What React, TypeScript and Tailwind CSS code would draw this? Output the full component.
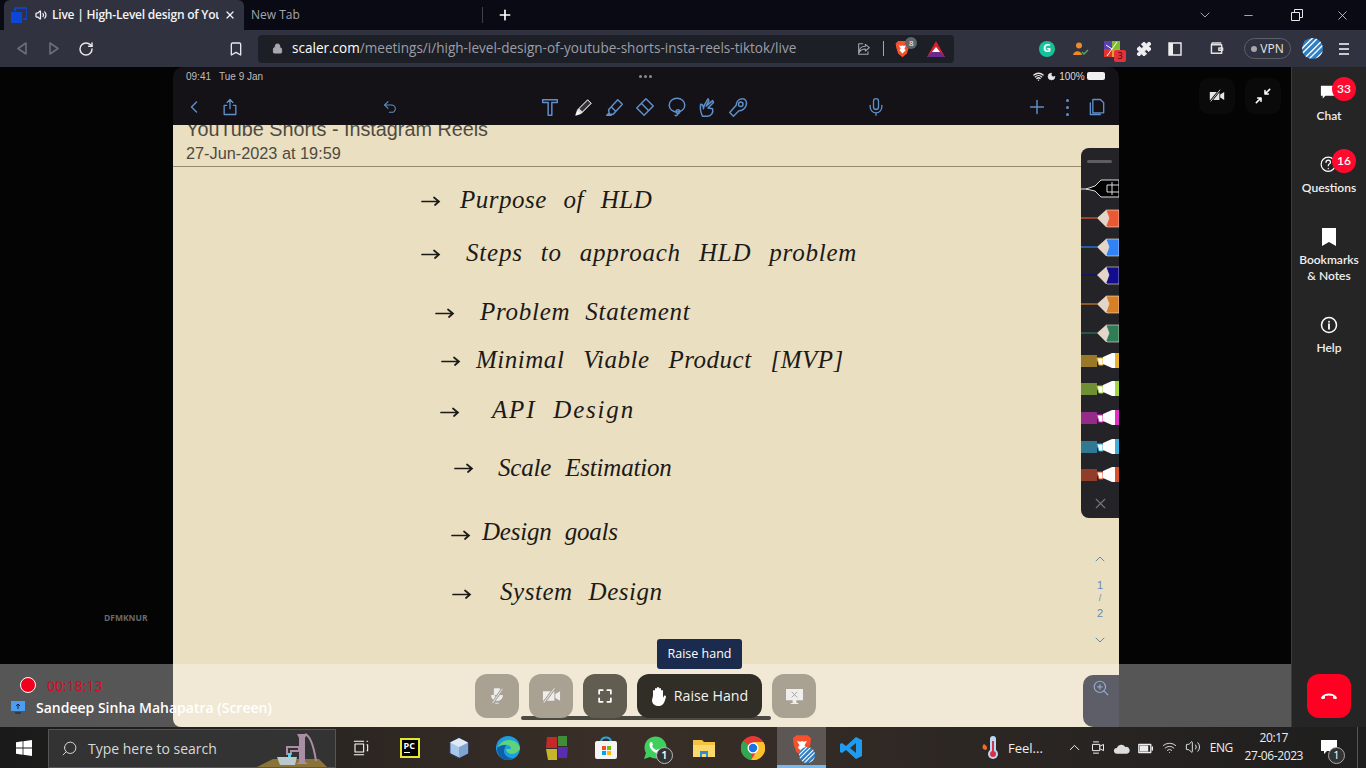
import React from "react";
import { ChevronLeft, ChevronUp, ChevronDown, Plus, Undo2, Mic, RotateCw, Lock, Bookmark, Puzzle, X, Minus, Search, Volume2, Wifi, Moon } from "lucide-react";

const S = ({ className, children, vb = "0 0 24 24" }: { className?: string; children: React.ReactNode; vb?: string }) => (
  <svg viewBox={vb} className={className} fill="none" stroke="currentColor" strokeWidth={1.6} strokeLinecap="round" strokeLinejoin="round">{children}</svg>
);

const Globe = ({ className }: { className: string }) => (
  <svg viewBox="0 0 24 24" className={className}>
    <defs><clipPath id="gc"><circle cx="12" cy="12" r="12" /></clipPath></defs>
    <g clipPath="url(#gc)">
      <rect width="24" height="24" fill="#2f7fc4" />
      <path d="M-4 10L12-6M-4 16L18-6M-4 22L24-6M0 26L28-2M6 26L28 4M12 28L30 10" stroke="#fff" strokeWidth="1.6" />
    </g>
  </svg>
);

const BraveLogo = ({ className }: { className: string }) => (
  <svg viewBox="0 0 24 28" className={className}>
    <path d="M5 1h14l4 4-1 7-3 9-7 6-7-6-3-9L1 5z" fill="#f4512c" />
    <path d="M6 8l4 1 2-1 2 1 4-1-3 5 2 3-5 5-5-5 2-3z" fill="#fff" />
  </svg>
);

function Tabs() {
  return (
    <div className="flex h-[30px] bg-[#0a0a14] text-[12px] font-['Open_Sans',sans-serif]">
      <div className="ml-[4px] flex h-[30px] w-[240px] items-center rounded-t-[6px] bg-[#30333f] pl-[7px] text-[#f4f4f6]">
        <svg viewBox="0 0 16 16" className="h-[16px] w-[16px]"><path d="M0 5h11v11H0z" fill="#0d47d9" /><path d="M4 4V1h12v11h-4" fill="none" stroke="#0d47d9" strokeWidth="1.6" /></svg>
        <Volume2 className="ml-[8px] h-[12px] w-[12px]" strokeWidth={2.5} />
        <span className="ml-[5px] w-[167px] overflow-hidden whitespace-nowrap font-semibold tracking-[-0.22px]">Live | High-Level design of You</span>
        <X className="ml-[5px] h-[12px] w-[12px]" strokeWidth={2.5} />
      </div>
      <span className="ml-[7px] flex w-[231px] items-center text-[#a3a5ad]">New Tab</span>
      <div className="my-[7px] w-px bg-[#3f414a]" />
      <Plus className="ml-[14px] mt-[7px] h-[16px] w-[16px] text-white" strokeWidth={2.5} />
      <div className="ml-auto flex items-center text-[#e6e6e8]">
        <ChevronDown className="h-[16px] w-[16px] text-[#c8c8cc]" strokeWidth={1.2} />
        <Minus className="ml-[29px] h-[13px] w-[13px]" strokeWidth={1.3} />
        <svg viewBox="0 0 12 12" className="ml-[36px] h-[12px] w-[12px]" fill="none" stroke="currentColor"><path d="M.5 3.5h8v8h-8zM3.5 3V.5h8v8H9" /></svg>
        <X className="ml-[32px] mr-[16px] h-[15px] w-[15px]" strokeWidth={1.2} />
      </div>
    </div>
  );
}

function Toolbar() {
  return (
    <div className="flex h-[37px] items-center bg-[#30333f] font-['Open_Sans',sans-serif]">
      <S vb="0 0 12 14" className="ml-[16px] h-[15px] w-[12px] text-[#6b6e78]"><path d="M10 1.500v11L2 7z" /></S>
      <S vb="0 0 12 14" className="ml-[20px] h-[15px] w-[12px] text-[#6b6e78]"><path d="M2 1.500v11L10 7z" /></S>
      <RotateCw className="ml-[18px] h-[16px] w-[16px] text-[#e8e8ea]" strokeWidth={2.2} />
      <Bookmark className="ml-[134px] h-[16px] w-[16px] text-[#e8e8ea]" strokeWidth={2} />
      <div className="ml-[14px] flex h-[28px] w-[696px] items-center rounded-[4px] bg-[#1d1f27] pl-[14px]">
        <Lock className="h-[11px] w-[11px] fill-[#a8a8ae] text-[#a8a8ae]" strokeWidth={2} />
        <span className="ml-[9px] whitespace-nowrap text-[13.55px]"><span className="text-white">scaler.com</span><span className="text-[#9c9ea6]">/meetings/i/high-level-design-of-youtube-shorts-insta-reels-tiktok/live</span></span>
        <S className="ml-[60px] h-[16px] w-[16px] text-[#a5a7ad]" ><path d="M14 5l6 5-6 5v-3c-4 0-7 1-9 5 0-6 3-9 9-9zM10 4H4v16h14v-4" /></S>
        <div className="ml-[11px] h-[15px] w-px bg-[#a5a7ad]" />
        <div className="relative ml-[11px]">
          <BraveLogo className="h-[18px] w-[15px]" />
          <span className="absolute left-[10px] top-[-3px] flex h-[12px] w-[12px] items-center justify-center rounded-full bg-[#62646c] text-[8px] text-white">8</span>
        </div>
        <svg viewBox="0 0 18 16" className="ml-[17px] h-[16px] w-[18px]"><path d="M9 0l9 16H0z" fill="#d9202e" /><path d="M0 16l5-5h8l5 5z" fill="#662d91" /><path d="M9 6l4 5H5z" fill="#fff" /></svg>
      </div>
      <div className="ml-[85px] flex h-[16px] w-[16px] items-center justify-center rounded-full bg-[#15c39a] text-[11px] font-bold text-white">G</div>
      <svg viewBox="0 0 16 14" className="ml-[18px] h-[14px] w-[16px]"><circle cx="6" cy="3.5" r="3" fill="#f08a24" /><path d="M0 13c1-5 8-5 9 0z" fill="#f08a24" /><path d="M9 10l2 2 4-4" stroke="#4caf50" fill="none" strokeWidth="1.4" /></svg>
      <div className="relative ml-[15px] h-[16px] w-[16px]">
        <svg viewBox="0 0 16 16" className="h-[16px] w-[16px]"><path d="M0 0h8v8H0z" fill="#5a3fb0" /><path d="M8 0h8v8H8z" fill="#7dbb2f" /><path d="M0 8h8v8H0z" fill="#e0342f" /><path d="M8 8h8v8H8z" fill="#e89a2c" /><path d="M3 15l5-7 5-7M8 8L2 4" stroke="#fff" strokeWidth="1" /></svg>
        <span className="absolute left-[10px] top-[9px] flex h-[12px] w-[12px] items-center justify-center rounded-[2px] bg-[#e5313a] text-[9px] text-[#3a0b0b]">3</span>
      </div>
      <Puzzle className="ml-[16px] h-[16px] w-[16px] fill-[#eeeef0] text-[#eeeef0]" strokeWidth={1.5} />
      <svg viewBox="0 0 14 14" className="ml-[16px] h-[14px] w-[14px]"><path d="M1 1h12v12H1z" fill="none" stroke="#eee" strokeWidth="1.4" /><path d="M1 1h4v12H1z" fill="#eee" /></svg>
      <S vb="0 0 16 14" className="ml-[27px] h-[13px] w-[16px] text-[#e2e2e4]"><path d="M2 3h11v9H2zM2 3l1-2h9M10 6.500h4v2.500h-4z" /></S>
      <div className="ml-[19px] flex h-[21px] w-[47px] items-center justify-center rounded-full border border-[#5d606b] text-[12px] text-[#e6e6e8]"><span className="mr-[3px] h-[6px] w-[6px] rounded-full bg-[#a5a7ad]" />VPN</div>
      <Globe className="ml-[11px] h-[21px] w-[21px]" />
      <div className="ml-[16px] flex w-[10px] flex-col gap-[3px]"><div className="h-[2px] bg-[#c8c9cd]" /><div className="h-[2px] bg-[#c8c9cd]" /><div className="h-[2px] bg-[#c8c9cd]" /></div>
    </div>
  );
}

function IpadHeader() {
  const blue = "text-[#5f8fc9]";
  return (
    <div className="flex h-[58px] flex-none flex-col rounded-t-[10px] bg-[#151217] font-['Liberation_Sans',sans-serif]">
      <div className="flex h-[18px] items-center text-[10px] text-[#bdbdbd]">
        <span className="ml-[13px]">09:41</span>
        <span className="ml-[8px]">Tue 9 Jan</span>
        <span className="ml-[376px] flex gap-[2px]"><i className="h-[3px] w-[3px] rounded-full bg-[#8b8b8f]" /><i className="h-[3px] w-[3px] rounded-full bg-[#8b8b8f]" /><i className="h-[3px] w-[3px] rounded-full bg-[#8b8b8f]" /></span>
        <Wifi className="ml-[381px] h-[11px] w-[11px] text-[#e6e6e6]" strokeWidth={3} />
        <Moon className="ml-[3px] h-[9px] w-[9px] fill-[#e6e6e6] text-[#e6e6e6]" />
        <span className="ml-[3px] text-[#dcdcdc]">100%</span>
        <span className="ml-[2px] h-[8px] w-[18px] rounded-[2px] bg-[#f0f0f0]" />
      </div>
      <div className="flex h-[40px] items-center pt-[4px]">
        <ChevronLeft className={`ml-[11px] h-[20px] w-[20px] ${blue}`} strokeWidth={1.7} />
        <S className={`ml-[16px] h-[20px] w-[20px] ${blue}`}><path d="M12 14V3M8.5 6.500L12 3l3.500 3.500M8 10H5v11h14V10h-3" /></S>
        <Undo2 className={`ml-[142px] h-[16px] w-[16px] ${blue}`} strokeWidth={1.6} />
        <S className={`ml-[141px] h-[22px] w-[22px] ${blue}`}><path d="M4 7V4h16v3h-6v14h-4V7z" /></S>
        <svg viewBox="0 0 24 24" className="ml-[12px] h-[22px] w-[22px]"><path d="M3 21l2-6L16 4l4 4L9 19z" fill="#ddd" stroke="#ddd" /><path d="M7 14l9-9 3 3-9 9z" fill="#333" /><path d="M3 21l2-5 3 3z" fill="#fff" /></svg>
        <S className={`ml-[9px] h-[22px] w-[22px] ${blue}`}><path d="M5 15L15 4l5 5-10 11H6zM5 19l-2 2h5M8 12l5 5" /></S>
        <S className={`ml-[8px] h-[22px] w-[22px] ${blue}`}><path d="M3 13L13 3l8 8-10 10zM8 8l8 8" /></S>
        <S className={`ml-[10px] h-[22px] w-[22px] ${blue}`}><ellipse cx="12" cy="10" rx="8.500" ry="7.500" /><circle cx="13" cy="17" r="2" /><path d="M13 19c0 2-2 3-3 2" /></S>
        <S className={`ml-[9px] h-[22px] w-[22px] ${blue}`}><path d="M6 22c-2-4-3-8-2-13 2 0 3 2 3 5l1-4 4-7 1 2-3 6 7-6 1 2-6 6 5 1c1 4-1 8-6 8z" /></S>
        <S className={`ml-[8px] h-[22px] w-[22px] ${blue}`}><path d="M3 18l7-8c0-5 4-7 7-7s5 3 4 7-5 6-8 6l-6 6z" /><circle cx="15" cy="9" r="2.500" /></S>
        <Mic className={`ml-[117px] h-[20px] w-[20px] ${blue}`} strokeWidth={1.6} />
        <Plus className={`ml-[140px] h-[22px] w-[22px] ${blue}`} strokeWidth={1.6} />
        <div className="ml-[18px] flex flex-col gap-[4px]"><i className="h-[3px] w-[3px] rounded-full bg-[#5f8fc9]" /><i className="h-[3px] w-[3px] rounded-full bg-[#5f8fc9]" /><i className="h-[3px] w-[3px] rounded-full bg-[#5f8fc9]" /></div>
        <S className={`ml-[18px] h-[20px] w-[20px] ${blue}`}><path d="M7 3h9l4 4v12H7zM4 7v14h12" /></S>
      </div>
    </div>
  );
}

const Arrow = ({ className }: { className: string }) => (
  <svg viewBox="0 0 20 10" className={className} fill="none" stroke="#1c1a18" strokeWidth="1.7" strokeLinecap="round"><path d="M1 5.500h17M13 1.500l5 4-4 3.500" /></svg>
);

const hand = "absolute whitespace-nowrap font-['Liberation_Serif',serif] italic text-[#1c1a18] text-[25px] leading-none";

function Handwriting() {
  return (
    <>
      <Arrow className="absolute left-[248px] top-[71px] h-[10px] w-[20px]" />
      <span className={`${hand} left-[287px] top-[62px] tracking-[0.5px] [word-spacing:10px]`}>Purpose of HLD</span>
      <Arrow className="absolute left-[248px] top-[124px] h-[10px] w-[20px]" />
      <span className={`${hand} left-[293px] top-[115px] tracking-[0.78px] [word-spacing:11px]`}>Steps to approach HLD problem</span>
      <Arrow className="absolute left-[262px] top-[183px] h-[10px] w-[20px]" />
      <span className={`${hand} left-[307px] top-[174px] tracking-[0.73px] [word-spacing:8px]`}>Problem Statement</span>
      <Arrow className="absolute left-[268px] top-[231px] h-[10px] w-[20px]" />
      <span className={`${hand} left-[303px] top-[222px] tracking-[0.52px] [word-spacing:12px]`}>Minimal Viable Product [MVP]</span>
      <Arrow className="absolute left-[267px] top-[282px] h-[10px] w-[20px]" />
      <span className={`${hand} left-[319px] top-[272px] tracking-[1.8px] [word-spacing:9px]`}>API Design</span>
      <Arrow className="absolute left-[281px] top-[338px] h-[10px] w-[20px]" />
      <span className={`${hand} left-[325px] top-[330px] tracking-[-0.2px] [word-spacing:8px]`}>Scale Estimation</span>
      <Arrow className="absolute left-[278px] top-[405px] h-[10px] w-[20px]" />
      <span className={`${hand} left-[309px] top-[394px] tracking-[-0.2px] [word-spacing:7px]`}>Design goals</span>
      <Arrow className="absolute left-[279px] top-[464px] h-[10px] w-[20px]" />
      <span className={`${hand} left-[327px] top-[454px] tracking-[0.55px] [word-spacing:9px]`}>System Design</span>
    </>
  );
}

function PenRail() {
  const pen = (y: number, c: string) => (
    <g key={y}>
      <path d={`M0 ${y}h16`} stroke={c} strokeWidth="1.5" opacity="0.8" />
      <path d={`M16 ${y}l9-8h13v17H25z`} fill="#e3d5c8" />
      <path d={`M25 ${y - 8}h13v17H26l-1-1 3-8z`} fill={c} stroke="#f0e8e0" strokeWidth="0.6" />
    </g>
  );
  const marker = (y: number, c: string) => (
    <g key={y}>
      <path d={`M0 ${y - 6}h16v12H0z`} fill={c} opacity="0.6" />
      <path d={`M16 ${y - 3}h6v7h-4z`} fill="#fff" stroke={c} strokeWidth="1" />
      <path d={`M22 ${y - 4}l9-4h3v15h-3l-9-4z`} fill="#fff" />
      <path d={`M34 ${y - 8}h4v15h-4z`} fill={c} />
    </g>
  );
  return (
    <div className="absolute right-0 top-[23px] flex h-[370px] w-[38px] flex-col rounded-l-[8px] bg-[#232328]">
      <div className="ml-[6px] mt-[12px] h-[3px] w-[25px] flex-none rounded-full bg-[#5e5e62]" />
      <svg viewBox="0 0 38 322" className="h-[322px] w-[38px] flex-none">
        <g>
          <path d="M0 26h6" stroke="#aaa" strokeWidth="1.5" />
          <path d="M5 26l9-3 6-6h18v17H20l-6-6z" fill="#000" stroke="#ddd" strokeWidth="1" />
          <path d="M26 22h12M26 22v7h12M31 19v13" stroke="#ddd" strokeWidth="1" fill="none" />
        </g>
        {[["55", "#e95a34"], ["84", "#2f83f6"], ["112", "#130c8c"], ["141", "#d67f26"], ["170", "#2e7d56"]].map(([y, c]) => pen(Number(y), c))}
        {[["198", "#e8b32a"], ["226", "#a4d53a"], ["255", "#e030c8"], ["284", "#3bb0dc"], ["312", "#d9502a"]].map(([y, c]) => marker(Number(y), c))}
      </svg>
      <X className="ml-[11px] mt-[10px] h-[17px] w-[17px] text-[#77777b]" strokeWidth={1.6} />
    </div>
  );
}

function PageNav() {
  return (
    <div className="absolute right-[7px] top-[426px] flex w-[24px] flex-col items-center text-[11px] leading-none text-[#6787b8] font-['Liberation_Sans',sans-serif]">
      <ChevronUp className="h-[16px] w-[16px]" strokeWidth={1.5} />
      <span className="mt-[13px]">1</span>
      <span className="mt-[3px] text-[9px]">/</span>
      <span className="mt-[5px]">2</span>
      <ChevronDown className="mt-[13px] h-[16px] w-[16px]" strokeWidth={1.5} />
    </div>
  );
}

function Paper() {
  return (
    <div className="relative flex-1 overflow-hidden rounded-b-[8px] bg-[#eadfc0] font-['Liberation_Sans',sans-serif] text-[#4e4a42]">
      <div className="ml-[13px] mt-[-7px] text-[19.8px] leading-[23px]">YouTube Shorts - Instagram Reels</div>
      <div className="ml-[13px] mt-[3px] text-[16.3px] leading-[18px]">27-Jun-2023 at 19:59</div>
      <div className="mt-[4px] h-px bg-[#96896c]" />
      <Handwriting />
      <PenRail />
      <PageNav />
    </div>
  );
}

const ctrl = "flex h-[44px] w-[44px] items-center justify-center rounded-[12px]";

function Controls() {
  return (
    <div className="absolute inset-x-0 bottom-0 h-[63px] bg-white/[0.33]">
      <div className="absolute left-[20px] top-[13px] h-[16px] w-[16px] rounded-full border border-white bg-[#f0001c]" />
      <span className="absolute left-[47px] top-[13px] text-[14px] leading-[18px] text-[#e8001e] font-['Open_Sans',sans-serif]">00:18:13</span>
      <svg viewBox="0 0 14 13" className="absolute left-[11px] top-[37px] h-[13px] w-[14px]"><path d="M0 0h14v10H0z" fill="#4a9df0" /><path d="M4 12h6M7 8V3M5 5l2-2 2 2" stroke="#123" strokeWidth="1" fill="none" /></svg>
      <span className="absolute left-[36px] top-[34px] whitespace-nowrap text-[14px] font-semibold leading-[20px] text-white font-['Open_Sans',sans-serif]">Sandeep Sinha Mahapatra (Screen)</span>

      <div className="absolute left-[521px] top-[52px] h-[4px] w-[250px] rounded-full bg-[#4b4942]" />
      <div className="absolute left-[475px] top-[10px] flex gap-[10px]">
        <div className={`${ctrl} bg-[#a9a293]`}>
          <svg viewBox="0 0 20 20" className="h-[18px] w-[18px]" fill="#eee"><path d="M7 2h6v9H7zM4 9c0 4 2 6 6 6s6-2 6-6M8 18h4" stroke="#eee" /><path d="M16 2L5 18" stroke="#a9a293" strokeWidth="3" /><path d="M16 2L5 18" stroke="#eee" strokeWidth="1" /></svg>
        </div>
        <div className={`${ctrl} bg-[#a9a293]`}>
          <svg viewBox="0 0 20 16" className="h-[16px] w-[19px]" fill="#eee"><path d="M1 3h12v10H1zM14 6l5-3v10l-5-3z" /><path d="M13 0L2 15" stroke="#a9a293" strokeWidth="3" /><path d="M13 0L2 15" stroke="#eee" strokeWidth="1" /></svg>
        </div>
        <div className={`${ctrl} bg-[#615d50]`}>
          <S className="h-[14px] w-[14px] text-white"><path strokeWidth="3" d="M2 8V2h6M16 2h6v6M22 16v6h-6M8 22H2v-6" /></S>
        </div>
        <div className="flex h-[44px] w-[125px] items-center justify-center gap-[7px] rounded-[12px] bg-[#312e28] text-[14.2px] text-[#f4f2ec] font-['Open_Sans',sans-serif]">
          <svg viewBox="0 0 16 20" className="h-[20px] w-[16px]" fill="#fff"><path d="M2 10V5a1 1 0 012 0V3a1 1 0 012 0V2a1 1 0 012 0v1a1 1 0 012 0v2a1 1 0 012 0v7l1-2c1-1 2 0 2 1-1 3-2 9-7 9-4 0-7-2-7-6z" /></svg>
          Raise Hand
        </div>
        <div className={`${ctrl} bg-[#a9a293]`}>
          <svg viewBox="0 0 20 18" className="h-[17px] w-[19px]"><path d="M1 1h18v12H1zM8 13h4v3H8zM6 16h8v1H6z" fill="#eee" /><path d="M7 4l6 6M13 4l-6 6" stroke="#a9a293" strokeWidth="1" /></svg>
        </div>
      </div>
      <div className="absolute left-[657px] top-[-25px] flex h-[30px] w-[85px] items-center justify-center rounded-[3px] bg-[#1a2b4d] text-[12.5px] text-white font-['Open_Sans',sans-serif]">Raise hand</div>
      <div className="absolute left-[1083px] top-[11px] flex h-[52px] w-[36px] justify-center rounded-l-[10px] bg-[#5e5e68] pt-[4px]">
        <S className="h-[18px] w-[18px] text-[#8fa8cc]"><circle cx="10.5" cy="10.5" r="7.500" /><path d="M21 21l-5.500-5.500M10.500 7.500v6M7.500 10.500h6" /></S>
      </div>
    </div>
  );
}

function Stage() {
  return (
    <div className="relative flex flex-1 bg-[#040404]">
      <div className="ml-[173px] flex w-[946px] flex-col">
        <IpadHeader />
        <Paper />
      </div>
      <span className="absolute left-[104px] top-[545px] text-[8.5px] font-bold text-[#6a6a6a] font-['Open_Sans',sans-serif]">DFMKNUR</span>
      <div className="absolute left-[1199px] top-[11px] flex gap-[10px]">
        <div className="flex h-[36px] w-[36px] items-center justify-center rounded-[10px] bg-[#0a0a0a]">
          <svg viewBox="0 0 20 16" className="h-[14px] w-[16px]" fill="#e6e6e6"><path d="M1 3h12v10H1zM14 6l5-3v10l-5-3z" /><path d="M14 0L2 15" stroke="#0a0a0a" strokeWidth="3" /><path d="M14 0L2 15" stroke="#e6e6e6" strokeWidth="1" /></svg>
        </div>
        <div className="flex h-[36px] w-[36px] items-center justify-center rounded-[10px] bg-[#0a0a0a]">
          <S className="h-[16px] w-[16px] text-white"><path strokeWidth="2.4" d="M22 2l-7 7M15 4v5h5M2 22l7-7M4 15h5v5" /></S>
        </div>
      </div>
      <Controls />
    </div>
  );
}

const Badge = ({ n }: { n: number }) => (
  <span className="absolute left-[40px] top-[-6px] flex h-[24px] w-[24px] items-center justify-center rounded-full bg-[#ff0a2e] text-[12px] text-white">{n}</span>
);

function Sidebar() {
  const item = "relative flex flex-col items-center text-[12px] font-semibold leading-[16px] text-[#f0f0f0]";
  return (
    <div className="flex w-[75px] flex-none flex-col border-l border-[#3c3c3c] bg-[#252525] pt-[16px] font-['Lato',sans-serif]">
      <div className={`${item} h-[72px]`}>
        <svg viewBox="0 0 20 18" className="mb-[6px] mt-[1px] h-[18px] w-[18px]" fill="#fff"><path d="M1 1h15v11H6l-3 3v-3H1z" /></svg>
        Chat
        <Badge n={33} />
      </div>
      <div className={`${item} h-[72px]`}>
        <S className="mb-[6px] mt-[1px] h-[18px] w-[18px] text-white"><circle cx="11" cy="11" r="9.500" /><path d="M8 8.500c0-4 6-4 6 0 0 2-3 2-3 4.500M11 16.500v.5" /></S>
        Questions
        <Badge n={16} />
      </div>
      <div className={`${item} h-[88px]`}>
        <svg viewBox="0 0 14 18" className="mb-[6px] mt-[1px] h-[18px] w-[14px]" fill="#fff"><path d="M0 0h14v18l-7-4-7 4z" /></svg>
        <span>Bookmarks</span>
        <span>&amp; Notes</span>
      </div>
      <div className={`${item}`}>
        <S className="mb-[6px] mt-[1px] h-[18px] w-[18px] text-white"><circle cx="12" cy="12" r="10" strokeWidth="2" /><path strokeWidth="2.4" d="M12 11v6M12 7.500v.2" /></S>
        Help
      </div>
      <div className="ml-[15px] mt-auto mb-[9px] flex h-[44px] w-[44px] items-center justify-center rounded-[12px] bg-[#ff0022]">
        <svg viewBox="0 0 20 10" className="h-[8px] w-[18px]" fill="#fff"><path d="M0 7c4-7 16-7 20 0l-1 2-4-1V5c-3-1-7-1-10 0v3L1 9z" /></svg>
      </div>
    </div>
  );
}

const Slot = ({ children, className = "" }: { children: React.ReactNode; className?: string }) => (
  <div className={`relative flex h-[41px] w-[49px] flex-none items-center justify-center ${className}`}>{children}</div>
);

function Taskbar() {
  return (
    <div className="flex h-[41px] bg-linear-to-r from-[#1a1a1a] via-[#3a2f28] via-45% to-[#1e1e1e] font-['Open_Sans',sans-serif] text-[#eee]">
      <div className="flex w-[48px] items-center justify-center">
        <svg viewBox="0 0 16 16" className="h-[16px] w-[16px]" fill="#fff"><path d="M0 2.300l6.600-1v6.300H0zM7.400 1.200L16 0v7.600H7.400zM0 8.400h6.600v6.300l-6.600-1zM7.400 8.400H16V16l-8.600-1.200z" /></svg>
      </div>
      <div className="relative mt-[2px] flex h-[39px] w-[288px] items-center border border-[#555] bg-[#333] pl-[12px] text-[#d8d8d8]">
        <Search className="h-[17px] w-[17px] -scale-x-100" strokeWidth={1.4} />
        <span className="ml-[10px] text-[14px]">Type here to search</span>
        <svg viewBox="0 0 80 39" className="absolute bottom-0 right-0 h-[39px] w-[80px]">
          <path d="M2 39l16-8h46l8 8z" fill="#8a7338" />
          <path d="M44 34V10l-2-4h10l-2 4v24l3 2H41z" fill="#a98ea5" />
          <path d="M32 19h12v4H36v3h-4zM50 6c6 2 9 14 11 27" stroke="#a98ea5" strokeWidth="2" fill="none" />
          <path d="M33 25h3v6h-3z" fill="#5dd3f0" />
          <path d="M22 29h20l-2 8H25z" fill="#b9c9cc" />
        </svg>
      </div>
      <Slot className="w-[48px]">
        <S className="h-[16px] w-[18px] text-white"><path d="M2 2h14M2 22h14M3 6h13v12H3zM21 2h1M21 7h1v9h-1" /></S>
      </Slot>
      <Slot>
        <div className="flex h-[20px] w-[20px] flex-col border-2 border-[#e8e337] bg-black pl-[2px] text-[9px] font-bold leading-[11px] text-white">PC<i className="mt-[1px] h-[1px] w-[6px] bg-white" /></div>
      </Slot>
      <Slot>
        <svg viewBox="0 0 22 24" className="h-[22px] w-[20px]"><path d="M11 1l10 5v12l-10 5-10-5V6z" fill="#a8c8e8" stroke="#2a2f6a" /><path d="M11 11l10-5v12l-10 5z" fill="#7ea4d0" /><path d="M11 11L1 6l10-5 10 5z" fill="#dfeaf5" /></svg>
      </Slot>
      <Slot>
        <svg viewBox="0 0 24 24" className="h-[24px] w-[24px]"><circle cx="12" cy="12" r="12" fill="#1b9de2" /><path d="M24 13c0-5-5-9-11-9C7 4 3 8 2 12c2-3 6-4 9-3 3 .5 4 2 4 4h-5c0 3 3 5 6 5 3 0 6-2 8-5z" fill="#5ed37a" /><path d="M1 13c0 6 5 11 11 11 2 0 4-1 6-2-5 1-9-2-10-6 0-3 1-5 2-7-4 0-8 1-9 4z" fill="#0f5fa8" /></svg>
      </Slot>
      <Slot>
        <svg viewBox="0 0 22 24" className="h-[24px] w-[22px]"><path d="M1 1h10v11H0z" fill="#c62828" /><path d="M12 0h9v10h-9z" fill="#3f8f3a" /><path d="M0 13h11v11H2z" fill="#c4b82a" /><path d="M12 11h10l-1 11h-9z" fill="#5a2dae" /></svg>
      </Slot>
      <Slot>
        <svg viewBox="0 0 24 24" className="h-[24px] w-[24px]"><path d="M7 6c0-6 10-6 10 0" fill="none" stroke="#29a8e0" strokeWidth="2" /><rect x="1" y="5" width="22" height="18" rx="2" fill="#f4f4f4" /><path d="M8 10h4v4H8z" fill="#f25022" /><path d="M13 10h4v4h-4z" fill="#7fba00" /><path d="M8 15h4v4H8z" fill="#00a4ef" /><path d="M13 15h4v4h-4z" fill="#ffb900" /></svg>
      </Slot>
      <Slot>
        <svg viewBox="0 0 24 24" className="h-[24px] w-[24px]"><path d="M1 23l2-6a11 11 0 114 4z" fill="#3fcf5f" /><path d="M8 6c-2 1-2 4 0 7s6 5 8 4 2-2 1-3l-2-1-1 1c-2 0-4-2-5-4l1-1-1-3z" fill="#fff" /></svg>
        <span className="absolute left-[26px] top-[20px] flex h-[17px] w-[17px] items-center justify-center rounded-full border border-[#bbb] bg-[#333] text-[11px] font-semibold text-white">1</span>
      </Slot>
      <Slot>
        <svg viewBox="0 0 22 18" className="h-[18px] w-[22px]"><path d="M0 1h9l2 2h11v15H0z" fill="#f3c341" /><path d="M0 6h22v12H0z" fill="#fbd96a" /><path d="M7 12h8v6h-2v-3H9v3H7z" fill="#2d8dd6" /></svg>
      </Slot>
      <Slot>
        <svg viewBox="0 0 24 24" className="h-[24px] w-[24px]"><circle cx="12" cy="12" r="12" fill="#e53935" /><path d="M12 12L2 5a12 12 0 000 14 12 12 0 008 5z" fill="#2fa84f" /><path d="M12 6h10.400A12 12 0 0110 24l5-8z" fill="#fbc02d" /><circle cx="12" cy="12" r="5.500" fill="#fff" /><circle cx="12" cy="12" r="4.200" fill="#1a73e8" /></svg>
      </Slot>
      <Slot className="border-b-[3px] border-[#76b9ed] bg-[#5c5655]">
        <BraveLogo className="h-[24px] w-[20px]" />
        <Globe className="absolute left-[22px] top-[20px] h-[16px] w-[16px]" />
      </Slot>
      <Slot>
        <svg viewBox="0 0 24 24" className="h-[24px] w-[24px]"><path d="M17 1l6 3v16l-6 3-10-9-4 3-2-1V8l2-1 4 3z" fill="#1f9cf0" /><path d="M17 7l-6 5 6 5z" fill="#3a3029" /></svg>
      </Slot>
      <svg viewBox="0 0 18 26" className="ml-[106px] mt-[8px] h-[26px] w-[18px]"><path d="M3 9c-3 3-1 6 2 6 2-2 1-4-2-6z" fill="#f26a2a" /><rect x="9" y="1" width="6" height="18" rx="3" fill="#bcd8f2" /><circle cx="12" cy="19" r="5" fill="#bcd8f2" /><circle cx="12" cy="19" r="3" fill="#d9304a" /><path d="M11 6h2v12h-2z" fill="#d9304a" /></svg>
      <span className="ml-[9px] mt-[11px] text-[13px] leading-[20px]">Feel...</span>
      <ChevronUp className="ml-[23px] mt-[12px] h-[17px] w-[17px]" strokeWidth={1.4} />
      <S className="ml-[8px] mt-[13px] h-[15px] w-[15px]"><path d="M3 7h11v10H3zM14 10l6-3v10l-6-3M4 3h8M4 21h8" /></S>
      <svg viewBox="0 0 18 11" className="ml-[7px] mt-[16px] h-[11px] w-[17px]" fill="#ddd"><path d="M4 11a3 3 0 010-6 5 5 0 019-1 3.500 3.500 0 012 7z" /></svg>
      <S vb="0 0 20 12" className="ml-[8px] mt-[16px] h-[11px] w-[16px]"><path d="M1 1h15v10H1zM18 4v4" /><path d="M3 3h9v6H3z" fill="currentColor" /></S>
      <Wifi className="ml-[8px] mt-[13px] h-[15px] w-[15px]" strokeWidth={1.4} />
      <Volume2 className="ml-[8px] mt-[12px] h-[16px] w-[16px]" strokeWidth={1.4} />
      <span className="ml-[9px] mt-[11px] text-[12px] leading-[20px] tracking-[-0.5px]">ENG</span>
      <div className="ml-[11px] mt-[2px] flex w-[60px] flex-col items-center whitespace-nowrap text-[12px] leading-[18px] tracking-[-0.4px]">
        <span>20:17</span>
        <span>27-06-2023</span>
      </div>
      <div className="relative ml-[17px] mt-[13px] h-[16px] w-[16px]">
        <svg viewBox="0 0 16 16" className="h-[16px] w-[16px]"><path d="M0 0h16v11H6l-3 3v-3H0z" fill="#fff" /></svg>
        <span className="absolute left-[7px] top-[7px] flex h-[17px] w-[17px] items-center justify-center rounded-full border border-[#aaa] bg-[#333] text-[11px] text-white">1</span>
      </div>
      <div className="ml-[20px] h-full w-px bg-[#555]" />
    </div>
  );
}

export default function App() {
  return (
    <div className="flex h-[768px] w-[1366px] flex-col overflow-hidden bg-black">
      <Tabs />
      <Toolbar />
      <div className="flex h-[660px]">
        <Stage />
        <Sidebar />
      </div>
      <Taskbar />
    </div>
  );
}
